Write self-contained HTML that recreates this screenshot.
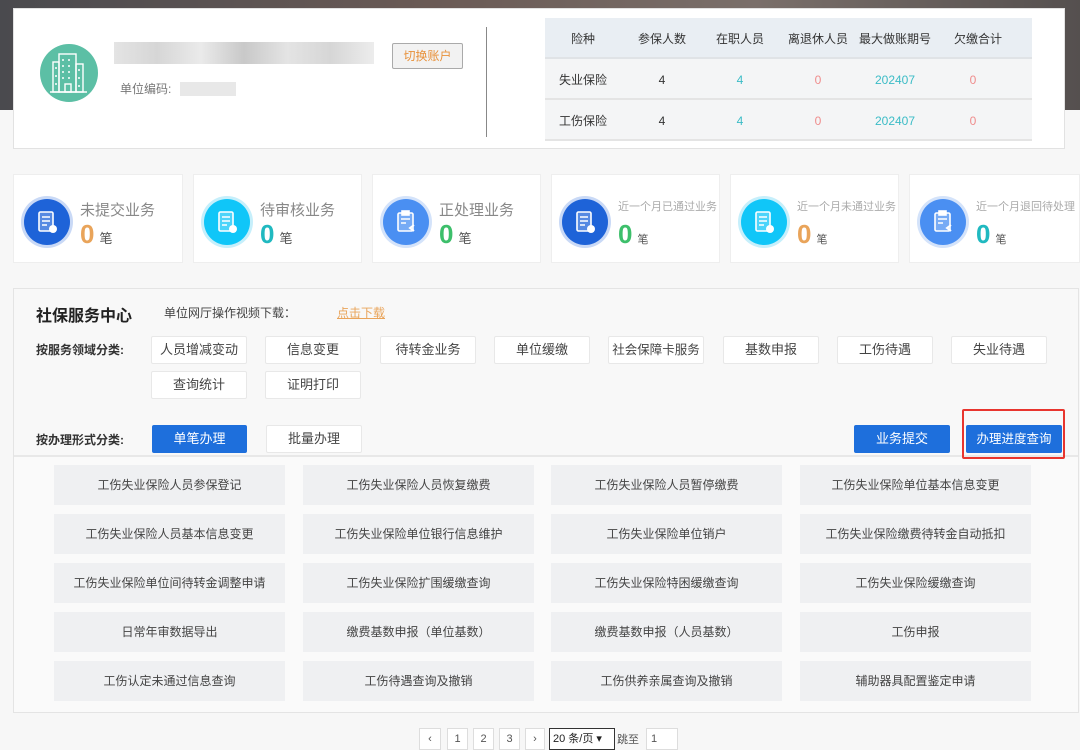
<!DOCTYPE html>
<html><head><meta charset="utf-8"><style>
*{margin:0;padding:0;box-sizing:border-box}
body{width:1080px;height:737px;overflow:hidden;background:#f7f7f7;font-family:"Liberation Sans","Noto Sans CJK SC",sans-serif;position:relative;color:#333}
.a{position:absolute}
.bg{left:0;top:0;width:1080px;height:110px;background:linear-gradient(90deg,#4a4a4e,#6a5a55 40%,#7a6f6a 70%,#55504f)}
.card{left:13px;top:8px;width:1052px;height:141px;background:#fff;border:1px solid #e2e2e2}
.stat{top:174px;height:89px;background:#fff;border:1px solid #eee}
.ic{width:46px;height:46px;border-radius:50%;top:24px;left:10px}
.ic svg{position:absolute;left:0;top:0}
.st{font-size:15px;color:#888;left:66px;top:24px;white-space:nowrap}
.st.s{font-size:11px;color:#aaa;top:23px}
.num{left:66px;top:44px;font-size:26px;font-weight:bold}
.bi{font-size:13px;color:#555;margin-left:5px;font-weight:normal}
.c{width:100px;margin-left:-50px;text-align:center;font-size:12px;white-space:nowrap;line-height:16px;height:16px}
.chip{height:28px;background:#fff;border:1px solid #e8e8e8;font-size:13px;color:#444;text-align:center;line-height:26px;width:96px;border-radius:2px}
.g{width:231px;height:40px;background:#eff0f2;font-size:12px;color:#444;text-align:center;line-height:40px}
.pg{top:728px;height:22px;border:1px solid #ddd;background:#fff;font-size:11px;text-align:center;color:#555;line-height:20px}
</style></head><body>
<div class="a bg"></div>
<div class="a" style="left:13px;top:110px;width:1052px;height:40px;background:#f7f7f7"></div>
<div class="a card"></div>
<div class="a" style="left:40px;top:44px;width:58px;height:58px;border-radius:50%;background:#5cbfa5">
<svg width="58" height="58" viewBox="0 0 58 58"><g fill="none" stroke="#fff" stroke-width="1.4"><rect x="19" y="10" width="17" height="38"/><rect x="13" y="18" width="6" height="30"/><rect x="36" y="20" width="7" height="28"/><rect x="25" y="40" width="6" height="8"/><path d="M22 16h2M28 16h2M22 22h2M28 22h2M22 28h2M28 28h2M22 34h2M28 34h2M15 24h2M15 32h2M15 40h2M38 26h2M38 34h2M38 42h2"/><path d="M10 48h37"/></g></svg></div>
<div class="a" style="left:114px;top:42px;width:260px;height:22px;background:linear-gradient(90deg,#ddd,#ccc,#e5e5e5,#bbb,#ddd,#ccc,#e8e8e8);opacity:.8"></div>
<div class="a" style="left:120px;top:80px;font-size:12px;color:#777">单位编码:</div>
<div class="a" style="left:180px;top:82px;width:56px;height:14px;background:#e8e8e8"></div>
<div class="a" style="left:392px;top:43px;width:71px;height:26px;border:1px solid #aaa;background:#f2f2f2;border-radius:2px;color:#e8913a;font-size:12px;text-align:center;line-height:24px">切换账户</div>
<div class="a" style="left:486px;top:27px;width:1px;height:110px;background:#888"></div>

<div class="a" style="left:545px;top:18px;width:487px;height:41px;background:#e9eef3;border-bottom:2px solid #e0e3e6"></div>
<div class="a" style="left:545px;top:59px;width:487px;height:41px;background:#f4f5f6;border-bottom:2px solid #e4e4e4"></div>
<div class="a" style="left:545px;top:100px;width:487px;height:41px;background:#f4f5f6;border-bottom:2px solid #e4e4e4"></div>
<div class="a c" style="left:583px;top:31px">险种</div>
<div class="a c" style="left:662px;top:31px">参保人数</div>
<div class="a c" style="left:740px;top:31px">在职人员</div>
<div class="a c" style="left:818px;top:31px">离退休人员</div>
<div class="a c" style="left:895px;top:31px">最大做账期号</div>
<div class="a c" style="left:978px;top:31px">欠缴合计</div>
<div class="a c" style="left:583px;top:72px">失业保险</div>
<div class="a c" style="left:662px;top:72px">4</div>
<div class="a c" style="left:740px;top:72px;color:#3bbcc6">4</div>
<div class="a c" style="left:818px;top:72px;color:#ef8c8c">0</div>
<div class="a c" style="left:895px;top:72px;color:#3bbcc6">202407</div>
<div class="a c" style="left:973px;top:72px;color:#ef8c8c">0</div>
<div class="a c" style="left:583px;top:113px">工伤保险</div>
<div class="a c" style="left:662px;top:113px">4</div>
<div class="a c" style="left:740px;top:113px;color:#3bbcc6">4</div>
<div class="a c" style="left:818px;top:113px;color:#ef8c8c">0</div>
<div class="a c" style="left:895px;top:113px;color:#3bbcc6">202407</div>
<div class="a c" style="left:973px;top:113px;color:#ef8c8c">0</div>

<svg width="0" height="0" style="position:absolute"><defs>
<g id="d1" fill="none" stroke="#fff" stroke-width="1.6"><rect x="15" y="13" width="14" height="19" rx="1.5" fill="rgba(255,255,255,.25)"/><path d="M18 18h8M18 22h8M18 26h5"/><circle cx="29" cy="30" r="4" fill="#fff" stroke="none"/></g>
<g id="d3" fill="none" stroke="#fff" stroke-width="1.6"><rect x="15" y="14" width="15" height="18" rx="1.5" fill="rgba(255,255,255,.25)"/><rect x="19" y="12" width="7" height="4" fill="#fff"/><path d="M18 20h9M18 24h5"/><path d="M31 32l-4-3 4-3" stroke-width="2"/></g>
</defs></svg>

<div class="a stat" style="left:13px;width:170px"><div class="a ic" style="background:#1e63d8;box-shadow:0 0 0 3px #c9d9f6"><svg width="46" height="46"><use href="#d1"/></svg></div><div class="a st">未提交业务</div><div class="a num" style="color:#e9a45a">0<span class="bi">笔</span></div></div>
<div class="a stat" style="left:193px;width:169px"><div class="a ic" style="background:#10c6f8;box-shadow:0 0 0 3px #c6effb"><svg width="46" height="46"><use href="#d1"/></svg></div><div class="a st">待审核业务</div><div class="a num" style="color:#20b9c0">0<span class="bi">笔</span></div></div>
<div class="a stat" style="left:372px;width:169px"><div class="a ic" style="background:#4a8ff2;box-shadow:0 0 0 3px #d4e3fa"><svg width="46" height="46"><use href="#d3"/></svg></div><div class="a st">正处理业务</div><div class="a num" style="color:#3dbf6b">0<span class="bi">笔</span></div></div>
<div class="a stat" style="left:551px;width:169px"><div class="a ic" style="background:#1e63d8;box-shadow:0 0 0 3px #c9d9f6"><svg width="46" height="46"><use href="#d1"/></svg></div><div class="a st s">近一个月已通过业务</div><div class="a num" style="color:#3dbf6b">0<span class="bi" style="font-size:11px">笔</span></div></div>
<div class="a stat" style="left:730px;width:169px"><div class="a ic" style="background:#10c6f8;box-shadow:0 0 0 3px #c6effb"><svg width="46" height="46"><use href="#d1"/></svg></div><div class="a st s">近一个月未通过业务</div><div class="a num" style="color:#e9a45a">0<span class="bi" style="font-size:11px">笔</span></div></div>
<div class="a stat" style="left:909px;width:171px"><div class="a ic" style="background:#4a8ff2;box-shadow:0 0 0 3px #d4e3fa"><svg width="46" height="46"><use href="#d3"/></svg></div><div class="a st s">近一个月退回待处理</div><div class="a num" style="color:#20b9c0">0<span class="bi" style="font-size:11px">笔</span></div></div>

<div class="a" style="left:13px;top:288px;width:1066px;height:425px;background:#f8f8f8;border:1px solid #e4e4e4"></div>
<div class="a" style="left:14px;top:455px;width:1064px;height:257px;background:#fafafa;border-top:2px solid #e8e8e8"></div>
<div class="a" style="left:36px;top:302px;font-size:16px;font-weight:bold;color:#222">社保服务中心</div>
<div class="a" style="left:164px;top:304px;font-size:12px;color:#444">单位网厅操作视频下载：</div>
<div class="a" style="left:337px;top:304px;font-size:12px;color:#e9a45a;text-decoration:underline">点击下载</div>
<div class="a" style="left:36px;top:341px;font-size:12px;font-weight:bold;color:#333">按服务领域分类:</div>
<div class="a chip" style="left:151px;top:336px">人员增减变动</div>
<div class="a chip" style="left:265px;top:336px">信息变更</div>
<div class="a chip" style="left:380px;top:336px">待转金业务</div>
<div class="a chip" style="left:494px;top:336px">单位缓缴</div>
<div class="a chip" style="left:608px;top:336px;font-size:12.5px">社会保障卡服务</div>
<div class="a chip" style="left:723px;top:336px">基数申报</div>
<div class="a chip" style="left:837px;top:336px">工伤待遇</div>
<div class="a chip" style="left:951px;top:336px">失业待遇</div>
<div class="a chip" style="left:151px;top:371px">查询统计</div>
<div class="a chip" style="left:265px;top:371px">证明打印</div>
<div class="a" style="left:36px;top:431px;font-size:12px;font-weight:bold;color:#333">按办理形式分类:</div>
<div class="a chip" style="left:152px;top:425px;width:95px;background:#1e6fdc;border-color:#1e6fdc;color:#fff">单笔办理</div>
<div class="a chip" style="left:266px;top:425px;width:96px">批量办理</div>
<div class="a chip" style="left:854px;top:425px;background:#1e6fdc;border-color:#1e6fdc;color:#fff">业务提交</div>
<div class="a chip" style="left:966px;top:425px;background:#1e6fdc;border-color:#1e6fdc;color:#fff;font-size:12.5px">办理进度查询</div>
<div class="a" style="left:962px;top:409px;width:103px;height:50px;border:2px solid #e8352e;border-radius:2px"></div>

<div class="a g" style="left:54px;top:465px">工伤失业保险人员参保登记</div>
<div class="a g" style="left:303px;top:465px">工伤失业保险人员恢复缴费</div>
<div class="a g" style="left:551px;top:465px">工伤失业保险人员暂停缴费</div>
<div class="a g" style="left:800px;top:465px">工伤失业保险单位基本信息变更</div>
<div class="a g" style="left:54px;top:514px">工伤失业保险人员基本信息变更</div>
<div class="a g" style="left:303px;top:514px">工伤失业保险单位银行信息维护</div>
<div class="a g" style="left:551px;top:514px">工伤失业保险单位销户</div>
<div class="a g" style="left:800px;top:514px">工伤失业保险缴费待转金自动抵扣</div>
<div class="a g" style="left:54px;top:563px">工伤失业保险单位间待转金调整申请</div>
<div class="a g" style="left:303px;top:563px">工伤失业保险扩围缓缴查询</div>
<div class="a g" style="left:551px;top:563px">工伤失业保险特困缓缴查询</div>
<div class="a g" style="left:800px;top:563px">工伤失业保险缓缴查询</div>
<div class="a g" style="left:54px;top:612px">日常年审数据导出</div>
<div class="a g" style="left:303px;top:612px">缴费基数申报（单位基数）</div>
<div class="a g" style="left:551px;top:612px">缴费基数申报（人员基数）</div>
<div class="a g" style="left:800px;top:612px">工伤申报</div>
<div class="a g" style="left:54px;top:661px">工伤认定未通过信息查询</div>
<div class="a g" style="left:303px;top:661px">工伤待遇查询及撤销</div>
<div class="a g" style="left:551px;top:661px">工伤供养亲属查询及撤销</div>
<div class="a g" style="left:800px;top:661px">辅助器具配置鉴定申请</div>

<div class="a pg" style="left:419px;width:22px">‹</div>
<div class="a pg" style="left:447px;width:21px">1</div>
<div class="a pg" style="left:473px;width:21px">2</div>
<div class="a pg" style="left:499px;width:21px">3</div>
<div class="a pg" style="left:525px;width:20px">›</div>
<div class="a pg" style="left:549px;width:66px;border-color:#333;text-align:left;padding-left:3px;color:#222">20 条/页 ▾</div>
<div class="a" style="left:617px;top:731px;font-size:11px;color:#555">跳至</div>
<div class="a pg" style="left:646px;width:32px;text-align:left;padding-left:4px">1</div>
</body></html>
